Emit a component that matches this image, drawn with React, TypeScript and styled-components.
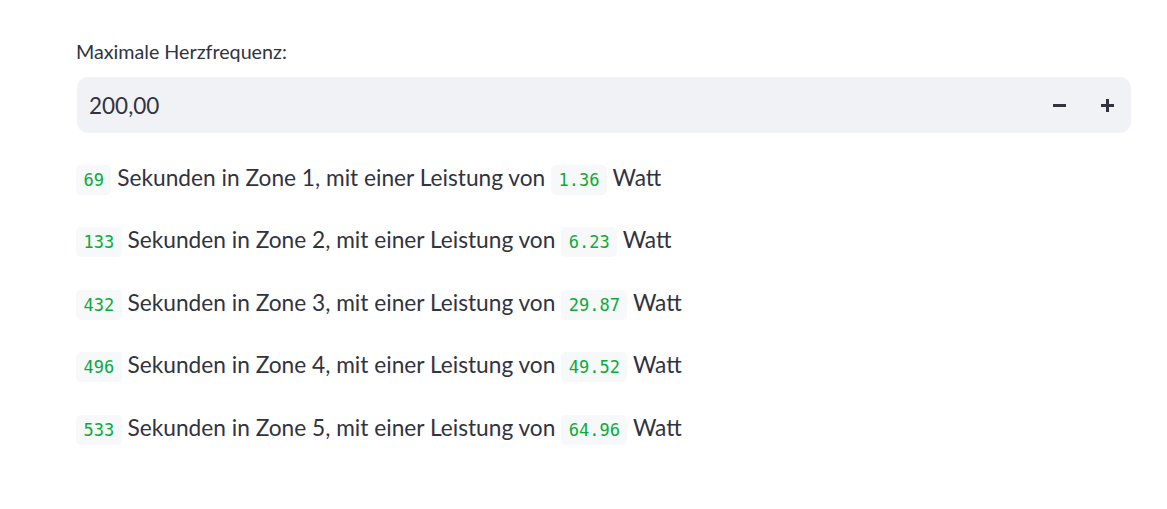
import React from 'react';
import styled, { createGlobalStyle } from 'styled-components';

const GlobalStyle = createGlobalStyle`
    body {
        margin: 0;
        background: #ffffff;
        color: rgb(49, 51, 63);
        font-family: Lato, "Noto Sans", sans-serif;
    }
`

const Main = styled.div`
    padding: 38px 36px 0 76px;
`

const Label = styled.label`
    display: block;
    font-size: 19.7px;
    line-height: 28px;
    margin-bottom: 11px;
`

const InputBox = styled.div`
    display: flex;
    align-items: center;
    height: 56px;
    border-radius: 11px;
    background: rgb(240, 242, 246);
    margin-left: 1px;
`

const Value = styled.div`
    flex: 1;
    padding-left: 12px;
    font-size: 22.5px;
`

const StepButton = styled.button`
    width: 48px;
    height: 100%;
    border: none;
    background: transparent;
    display: flex;
    align-items: center;
    justify-content: center;
    padding: 0;
    cursor: pointer;
    color: rgb(49, 51, 63);
`

const Rows = styled.div`
    margin-top: 27px;
`

const Row = styled.p`
    margin: 0 0 26.4px;
    font-size: 22.7px;
    line-height: 36px;
`

const Code = styled.code`
    font-family: "DejaVu Sans Mono", "Liberation Mono", monospace;
    font-size: 17px;
    line-height: 1;
    color: rgb(9, 171, 59);
    background: rgb(247, 248, 250);
    border-radius: 5px;
    padding: 5px 7.5px;
`

const zones = [
    { sec: 69, watt: '1.36' },
    { sec: 133, watt: '6.23' },
    { sec: 432, watt: '29.87' },
    { sec: 496, watt: '49.52' },
    { sec: 533, watt: '64.96' },
]

const Minus = () => (
    <svg width="13" height="13" viewBox="0 0 13 13">
        <rect x="0" y="5" width="13" height="3" fill="currentColor" />
    </svg>
)

const Plus = () => (
    <svg width="13" height="13" viewBox="0 0 13 13">
        <rect x="0" y="5" width="13" height="3" fill="currentColor" />
        <rect x="5" y="0" width="3" height="13" fill="currentColor" />
    </svg>
)

const App = () => {
    return (
        <Main>
            <GlobalStyle />
            <Label>Maximale Herzfrequenz:</Label>
            <InputBox>
                <Value>200,00</Value>
                <StepButton aria-label="minus"><Minus /></StepButton>
                <StepButton aria-label="plus"><Plus /></StepButton>
            </InputBox>
            <Rows>
                {zones.map((z, i) => (
                    <Row key={i}>
                        <Code>{z.sec}</Code> Sekunden in Zone {i + 1}, mit einer Leistung von <Code>{z.watt}</Code> Watt
                    </Row>
                ))}
            </Rows>
        </Main>
    );
};

export default App;
